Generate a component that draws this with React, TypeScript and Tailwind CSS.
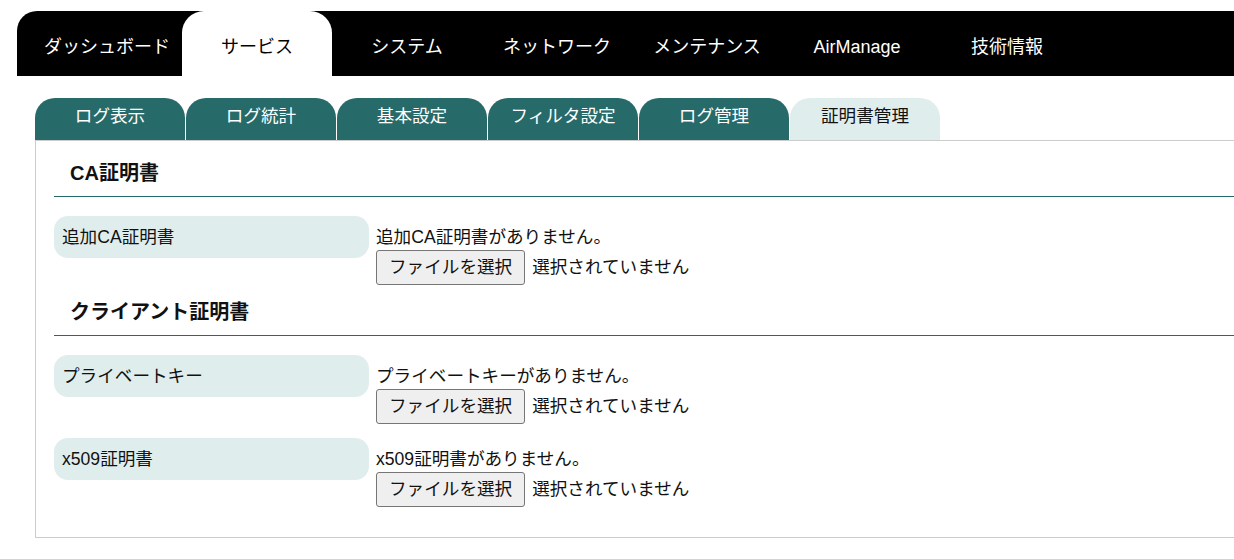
import React from "react";

const mainTabs = ["ダッシュボード", "サービス", "システム", "ネットワーク", "メンテナンス", "AirManage", "技術情報"];
const subTabs = ["ログ表示", "ログ統計", "基本設定", "フィルタ設定", "ログ管理", "証明書管理"];

function FileRow({ label, empty, first }: { label: string; empty: string; first?: boolean }) {
    return (
        <div className={`flex ${first ? "mt-[19px]" : "mt-[14px]"}`}>
            <div className="w-[315px] h-[42px] shrink-0 flex items-center px-2 rounded-[14px] bg-[#e0eded] text-[17.6px]">
                {label}
            </div>
            <div className="ml-[7px] pt-[8px] text-[17.6px]">
                <div className="leading-[26px]">{empty}</div>
                <div className="flex items-center">
                    <button className="h-[35px] px-3 bg-[#efefef] border border-[#767676] rounded-[3px] text-[17.6px] leading-none">
                        ファイルを選択
                    </button>
                    <span className="ml-[7px]">選択されていません</span>
                </div>
            </div>
        </div>
    );
}

function SectionTitle({ title, className }: { title: string; className: string }) {
    return (
        <div className={`h-[43px] pl-4 pt-[6px] border-b border-[#266a6a] font-bold text-[20px] leading-[26px] ${className}`}>
            {title}
        </div>
    );
}

export default function App() {
    return (
        <div
            className="w-[1234px] h-[559px] overflow-hidden bg-white text-[#111]"
            style={{ fontFamily: '"Liberation Sans", "Noto Sans CJK JP", sans-serif' }}
        >
            {/* top menu */}
            <div className="pt-[11px] pl-[17px]">
                <div className="w-[1260px] h-[65px] bg-black rounded-tl-[20px] flex pl-[15px]">
                    {mainTabs.map((t) => (
                        <div
                            key={t}
                            className={`w-[150px] h-full flex items-center justify-center pt-[8px] text-[18px] ${
                                t === "サービス" ? "bg-white text-black rounded-t-[22px]" : "text-white"
                            }`}
                        >
                            {t}
                        </div>
                    ))}
                </div>
            </div>

            {/* sub tabs */}
            <div className="ml-[35px] mt-[22px] flex gap-px">
                {subTabs.map((t) => (
                    <div
                        key={t}
                        className={`w-[150px] h-[42px] flex items-center justify-center pb-[6px] rounded-t-[20px] text-[17.6px] ${
                            t === "証明書管理" ? "bg-[#e0eded] text-[#111]" : "bg-[#266a6a] text-white"
                        }`}
                    >
                        {t}
                    </div>
                ))}
            </div>

            {/* panel */}
            <div className="ml-[35px] w-[1260px] border border-[#cccccc] px-[18px] pb-[30px]">
                <SectionTitle title="CA証明書" className="mt-[13px]" />
                <FileRow label="追加CA証明書" empty="追加CA証明書がありません。" first />
                <SectionTitle title="クライアント証明書" className="mt-[8px]" />
                <FileRow label="プライベートキー" empty="プライベートキーがありません。" first />
                <FileRow label="x509証明書" empty="x509証明書がありません。" />
            </div>
        </div>
    );
}
